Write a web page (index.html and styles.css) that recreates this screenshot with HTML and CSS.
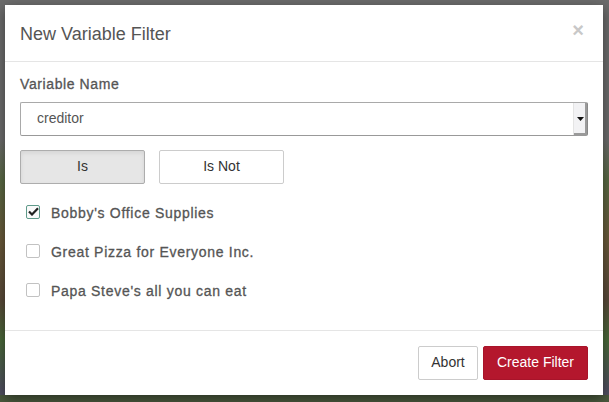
FILE: index.html
```html
<!DOCTYPE html>
<html>
<head>
<meta charset="utf-8">
<link rel="stylesheet" href="styles.css">
</head>
<body>
<div class="backdrop">
  <div class="modal">
    <div class="modal-header">
      <h4 class="modal-title">New Variable Filter</h4>
      <span class="close">&times;</span>
    </div>
    <div class="modal-body">
      <div class="field-label">Variable Name</div>
      <div class="select">
        <span class="select-value">creditor</span>
        <span class="select-arrow"><svg width="7" height="4" viewBox="0 0 7 4"><path d="M0 0h7L3.5 4z" fill="#111"/></svg></span>
      </div>
      <div class="toggle">
        <button class="btn btn-toggle active">Is</button>
        <button class="btn btn-toggle">Is Not</button>
      </div>
      <ul class="options">
        <li class="option">
          <span class="checkbox checked"><svg width="11" height="9" viewBox="0 0 11 9"><path d="M1 4.5l3 3L10 1.2" fill="none" stroke="#222" stroke-width="2.2"/></svg></span>
          <span class="option-label">Bobby's Office Supplies</span>
        </li>
        <li class="option">
          <span class="checkbox"></span>
          <span class="option-label">Great Pizza for Everyone Inc.</span>
        </li>
        <li class="option">
          <span class="checkbox"></span>
          <span class="option-label">Papa Steve's all you can eat</span>
        </li>
      </ul>
    </div>
    <div class="modal-footer">
      <button class="btn btn-default">Abort</button>
      <button class="btn btn-primary">Create Filter</button>
    </div>
  </div>
</div>
</body>
</html>
```
FILE: styles.css
```css
* { box-sizing: border-box; }
html, body { margin: 0; padding: 0; }
body {
  width: 609px;
  height: 402px;
  overflow: hidden;
  font-family: "Liberation Sans", Arial, sans-serif;
  background:
    linear-gradient(to bottom, transparent 0, transparent 395px, #4b5a3e 395px),
    linear-gradient(to bottom, #6c6c6c 0, #6c6c6c 140px, #5a6a44 180px, #6a5a3a 240px, #5a4a3a 300px, #4a6a3a 340px, #505060 390px);
}
.backdrop {
  padding: 5px 6px 7px 5px;
}
.modal {
  width: 598px;
  height: 390px;
  background: #fff;
  box-shadow: 0 4px 12px rgba(0,0,0,0.45);
  display: flex;
  flex-direction: column;
}
.modal-header {
  height: 57px;
  border-bottom: 1px solid #e5e5e5;
  display: flex;
  align-items: center;
  justify-content: space-between;
  padding: 0 19px 0 15px;
}
.modal-title {
  margin: 0;
  font-size: 18px;
  font-weight: normal;
  color: #555;
  padding-top: 2px;
}
.close {
  font-size: 20px;
  font-weight: bold;
  color: #c8c8c8;
  line-height: 1;
  margin-top: -6px;
}
.modal-body {
  flex: 1;
  padding: 12px 15px 0 15px;
}
.field-label {
  font-size: 14px;
  font-weight: normal;
  -webkit-text-stroke: 0.3px #555;
  color: #555;
  line-height: 20px;
  letter-spacing: 0.6px;
  margin-bottom: 8px;
}
.select {
  height: 34px;
  border: 1px solid #a9a9a9;
  border-right-color: #888;
  border-bottom-color: #999;
  display: flex;
  align-items: center;
  justify-content: space-between;
  padding-left: 16px;
  border-radius: 2px;
}
.select-value {
  font-size: 14px;
  color: #555;
  margin-top: -2px;
}
.select-arrow {
  width: 14px;
  height: 32px;
  background: #f2f2f4;
  border-left: 1px solid #e4e4e4;
  display: flex;
  align-items: center;
  justify-content: center;
  box-shadow: inset -2px -2px 0 #9a9a9a;
}
.toggle {
  display: flex;
  gap: 14px;
  margin-top: 14px;
}
.btn {
  font-family: "Liberation Sans", Arial, sans-serif;
  font-size: 14px;
  height: 34px;
  border-radius: 2px;
  border: 1px solid #ccc;
  background: #fff;
  color: #333;
  padding: 0 12px 3px;
  cursor: pointer;
}
.btn-toggle {
  width: 125px;
}
.btn-toggle.active {
  background: #e6e6e6;
  border-color: #adadad;
  box-shadow: inset 0 2px 4px rgba(0,0,0,0.08);
}
.options {
  list-style: none;
  margin: 0;
  padding: 0;
  padding-top: 17px;
}
.option {
  display: flex;
  align-items: center;
  height: 23px;
  margin-bottom: 16px;
  padding-left: 6px;
}
.checkbox {
  width: 14px;
  height: 14px;
  border: 1px solid #c2c2c2;
  border-radius: 2px;
  background: #fff;
  display: flex;
  align-items: center;
  justify-content: center;
  margin-right: 11px;
  margin-top: -2px;
}
.checkbox.checked {
  border-color: #5f9a8a;
  background: #fafafa;
}
.option-label {
  font-size: 14px;
  font-weight: normal;
  -webkit-text-stroke: 0.3px #555;
  color: #555;
  letter-spacing: 0.7px;
}
.modal-footer {
  border-top: 1px solid #e5e5e5;
  padding: 15px;
  display: flex;
  justify-content: flex-end;
  gap: 5px;
}
.btn-default {
  width: 60px;
  padding: 0 0 3px;
}
.btn-primary {
  width: 105px;
  padding: 0 0 3px;
  background: #b4172d;
  border-color: #a8142a;
  color: #fff;
}
```
